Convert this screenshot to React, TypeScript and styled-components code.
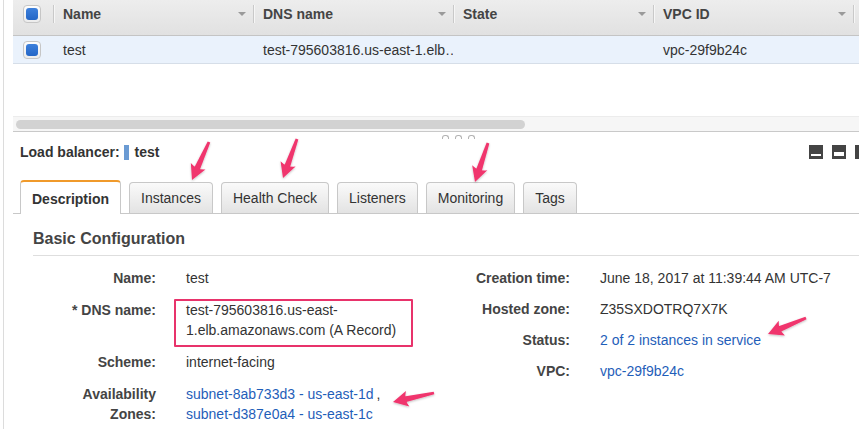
import React from 'react';
import styled, { createGlobalStyle, css } from 'styled-components';

const GlobalStyle = createGlobalStyle`
  html, body {
    margin: 0;
    padding: 0;
    background: #fff;
  }
  body {
    font-family: "Liberation Sans", Arial, Helvetica, sans-serif;
    font-size: 14px;
    color: #333;
  }
`;

const Page = styled.div`
  position: relative;
  width: 859px;
  height: 429px;
  overflow: hidden;
`;

const Frame = styled.div`
  margin-left: 3px;
  border-left: 1px solid #dcdcdc;
  padding-left: 9px;
  height: 429px;
`;

/* ---------- list table ---------- */

const ListArea = styled.div`
  height: 116px;
`;

const Table = styled.div`
  display: grid;
  grid-template-columns: 40px 200px 200px 200px 200px 1fr;
`;

const HeadCell = styled.div<{ $first?: boolean }>`
  position: relative;
  height: 36px;
  box-sizing: border-box;
  padding: 0 7px 7px 10px;
  display: flex;
  align-items: center;
  background: linear-gradient(#ededed, #e1e1e1);
  border-bottom: 1px solid #c4c4c4;
  font-weight: bold;
  color: #444;

  ${(p) =>
    !p.$first &&
    css`
      &::before {
        content: '';
        position: absolute;
        left: 0;
        top: 5px;
        width: 1px;
        height: 18px;
        background: #c9c9c9;
        box-shadow: 1px 0 0 #f6f6f6;
      }
    `}
`;

const SortMark = styled.span`
  margin-left: auto;
  width: 0;
  height: 0;
  border-left: 4px solid transparent;
  border-right: 4px solid transparent;
  border-top: 4px solid #9a9a9a;
`;

const RowCell = styled.div`
  height: 28px;
  box-sizing: border-box;
  padding: 0 9px 0 10px;
  display: flex;
  align-items: center;
  background: #eaf2fc;
  border-bottom: 1px solid #d6dee8;
  color: #333;
  min-width: 0;
  white-space: nowrap;
`;

const Check = styled.span`
  width: 18px;
  height: 18px;
  box-sizing: border-box;
  border: 1px solid #c6c6c6;
  border-radius: 4px;
  background: linear-gradient(#fdfdfd, #ececec);
  display: flex;
  align-items: center;
  justify-content: center;

  &::after {
    content: '';
    width: 12px;
    height: 12px;
    border-radius: 3px;
    background: linear-gradient(#3d80dc, #2466c6);
  }
`;

const ScrollTrack = styled.div`
  height: 15px;
  box-sizing: border-box;
  background: #f6f6f6;
  border-top: 1px solid #ececec;
  padding: 3px 0 0 3px;
`;

const ScrollThumb = styled.div`
  width: 509px;
  height: 9px;
  border-radius: 5px;
  background: #d2d2d2;
`;

/* ---------- detail pane ---------- */

const Pane = styled.div`
  border-top: 1px solid #c9c9c9;
`;

const Grip = styled.div`
  height: 8px;
  display: flex;
  gap: 6px;
  padding: 3px 0 0 429px;
  box-sizing: border-box;
`;

const GripDot = styled.span`
  width: 5px;
  height: 3px;
  border: 1px solid #b3b3b3;
  border-bottom: none;
  border-radius: 3px 3px 0 0;
`;

const TitleRow = styled.div`
  height: 24px;
  display: flex;
  align-items: center;
  padding-left: 7px;
  font-weight: bold;
  color: #333;
`;

const Marker = styled.span`
  width: 5px;
  height: 15px;
  margin: 0 6px 0 4px;
  background: #6b9bd3;
`;

const ViewButtons = styled.div`
  margin-left: auto;
  margin-right: -10px;
  display: flex;
  gap: 9px;
`;

const TabStrip = styled.div`
  margin-top: 16px;
  height: 34px;
  box-sizing: border-box;
  border-bottom: 1px solid #c8c8c8;
  padding-left: 7px;
  display: flex;
  align-items: flex-end;
  gap: 8px;
`;

const Tab = styled.div<{ $active?: boolean }>`
  height: 31px;
  box-sizing: border-box;
  padding: 0 11px;
  display: flex;
  align-items: center;
  border: 1px solid #c8c8c8;
  border-bottom: none;
  border-radius: 4px 4px 0 0;
  background: linear-gradient(#fafafa, #e3e3e3);
  color: #333;
  white-space: nowrap;

  ${(p) =>
    p.$active &&
    css`
      height: 34px;
      margin-bottom: -1px;
      padding: 1px 11px 0;
      background: #fff;
      border-top: 2px solid #f09a2b;
      font-weight: bold;
    `}
`;

const Panel = styled.div`
  padding-left: 20px;
`;

const Heading = styled.div`
  margin-top: 15px;
  padding-bottom: 6px;
  line-height: 20px;
  font-size: 16px;
  font-weight: bold;
  color: #444;
  border-bottom: 1px solid #dedede;
  margin-right: -20px;
`;

const Details = styled.div`
  display: grid;
  grid-template-columns: 397px 1fr;
  margin-top: 12px;
`;

const FieldList = styled.div<{ $labelWidth: number; $rowGap: number }>`
  display: grid;
  grid-template-columns: ${(p) => p.$labelWidth}px 1fr;
  column-gap: 30px;
  row-gap: ${(p) => p.$rowGap}px;
  align-content: start;
  line-height: 20px;
`;

const Label = styled.div`
  text-align: right;
  font-weight: bold;
  color: #444;
`;

const Value = styled.div`
  position: relative;
  color: #333;
  white-space: nowrap;
`;

const Link = styled.a`
  color: #1f5eb9;
  text-decoration: none;
`;

const Comma = styled.span`
  margin-left: 3px;
`;

const Highlight = styled.span`
  position: absolute;
  left: -12px;
  top: -1px;
  width: 239px;
  height: 48px;
  box-sizing: border-box;
  border: 2px solid #e8336b;
  border-radius: 1px;
`;

const Overlay = styled.svg`
  position: absolute;
  left: 0;
  top: 0;
  pointer-events: none;
`;

/* ---------- drawings ---------- */

const LayoutIcon = ({ bar }: { bar: 'bottom' | 'middle' | 'side' }) => (
  <svg width="14" height="14" viewBox="0 0 14 14">
    <rect width="14" height="14" fill="#444" />
    {bar === 'bottom' && <rect x="2" y="9" width="10" height="2" fill="#fff" />}
    {bar === 'middle' && <rect x="2" y="7" width="10" height="4" fill="#fff" />}
    {bar === 'side' && <rect x="8" y="2" width="4" height="10" fill="#fff" />}
  </svg>
);

type ArrowProps = { x1: number; y1: number; x2: number; y2: number };

const Arrow = ({ x1, y1, x2, y2 }: ArrowProps) => {
  const len = Math.hypot(x2 - x1, y2 - y1);
  const dx = (x2 - x1) / len;
  const dy = (y2 - y1) / len;
  const nx = -dy;
  const ny = dx;
  const head = 15;
  const half = 8;
  const bx = x2 - dx * head;
  const by = y2 - dy * head;
  const shaft = [
    [x1 + nx * 1.4, y1 + ny * 1.4],
    [bx + dx * 3 + nx * 3, by + dy * 3 + ny * 3],
    [bx + dx * 3 - nx * 3, by + dy * 3 - ny * 3],
    [x1 - nx * 1.4, y1 - ny * 1.4],
  ];
  const headPath = `M${x2},${y2} L${bx + nx * half},${by + ny * half} Q${bx + dx * 4},${by + dy * 4} ${bx - nx * half},${by - ny * half} Z`;
  return (
    <g fill="#f0356d" filter="url(#arrowShadow)">
      <polygon points={shaft.map((p) => p.join(',')).join(' ')} />
      <path d={headPath} />
    </g>
  );
};

const arrows: ArrowProps[] = [
  { x1: 209, y1: 142, x2: 192, y2: 180 },
  { x1: 297, y1: 139, x2: 283, y2: 178 },
  { x1: 488, y1: 143, x2: 475, y2: 182 },
  { x1: 806, y1: 318, x2: 768, y2: 334 },
  { x1: 434, y1: 393, x2: 393, y2: 402 },
];

const columns = ['Name', 'DNS name', 'State', 'VPC ID', ''];
const tabs = ['Description', 'Instances', 'Health Check', 'Listeners', 'Monitoring', 'Tags'];

const App = () => {
  return (
    <Page>
      <GlobalStyle />
      <Frame>
        <ListArea>
          <Table>
            <HeadCell $first>
              <Check />
            </HeadCell>
            {columns.map((c, i) => (
              <HeadCell key={i}>
                {c}
                {c && <SortMark />}
              </HeadCell>
            ))}
            <RowCell>
              <Check />
            </RowCell>
            <RowCell>test</RowCell>
            <RowCell>test-795603816.us-east-1.elb…</RowCell>
            <RowCell />
            <RowCell>vpc-29f9b24c</RowCell>
            <RowCell />
          </Table>
        </ListArea>
        <ScrollTrack>
          <ScrollThumb />
        </ScrollTrack>

        <Pane>
          <Grip>
            <GripDot />
            <GripDot />
            <GripDot />
          </Grip>
          <TitleRow>
            Load balancer:
            <Marker />
            test
            <ViewButtons>
              <LayoutIcon bar="bottom" />
              <LayoutIcon bar="middle" />
              <LayoutIcon bar="side" />
            </ViewButtons>
          </TitleRow>

          <TabStrip>
            {tabs.map((t, i) => (
              <Tab key={t} $active={i === 0}>
                {t}
              </Tab>
            ))}
          </TabStrip>

          <Panel>
            <Heading>Basic Configuration</Heading>
            <Details>
              <FieldList $labelWidth={123} $rowGap={12}>
                <Label>Name:</Label>
                <Value>test</Value>
                <Label>* DNS name:</Label>
                <Value>
                  test-795603816.us-east-
                  <br />
                  1.elb.amazonaws.com (A Record)
                  <Highlight />
                </Value>
                <Label>Scheme:</Label>
                <Value>internet-facing</Value>
                <Label>
                  Availability
                  <br />
                  Zones:
                </Label>
                <Value>
                  <Link href="#">subnet-8ab733d3 - us-east-1d</Link>
                  <Comma>,</Comma>
                  <br />
                  <Link href="#">subnet-d387e0a4 - us-east-1c</Link>
                </Value>
              </FieldList>
              <FieldList $labelWidth={140} $rowGap={11}>
                <Label>Creation time:</Label>
                <Value>June 18, 2017 at 11:39:44 AM UTC-7</Value>
                <Label>Hosted zone:</Label>
                <Value>Z35SXDOTRQ7X7K</Value>
                <Label>Status:</Label>
                <Value>
                  <Link href="#">2 of 2 instances in service</Link>
                </Value>
                <Label>VPC:</Label>
                <Value>
                  <Link href="#">vpc-29f9b24c</Link>
                </Value>
              </FieldList>
            </Details>
          </Panel>
        </Pane>
      </Frame>

      <Overlay width="859" height="429" viewBox="0 0 859 429">
        <defs>
          <filter id="arrowShadow" x="-50%" y="-50%" width="200%" height="200%">
            <feDropShadow dx="0" dy="1" stdDeviation="1" floodColor="#000" floodOpacity="0.25" />
          </filter>
        </defs>
        {arrows.map((a, i) => (
          <Arrow key={i} {...a} />
        ))}
      </Overlay>
    </Page>
  );
};

export default App;
